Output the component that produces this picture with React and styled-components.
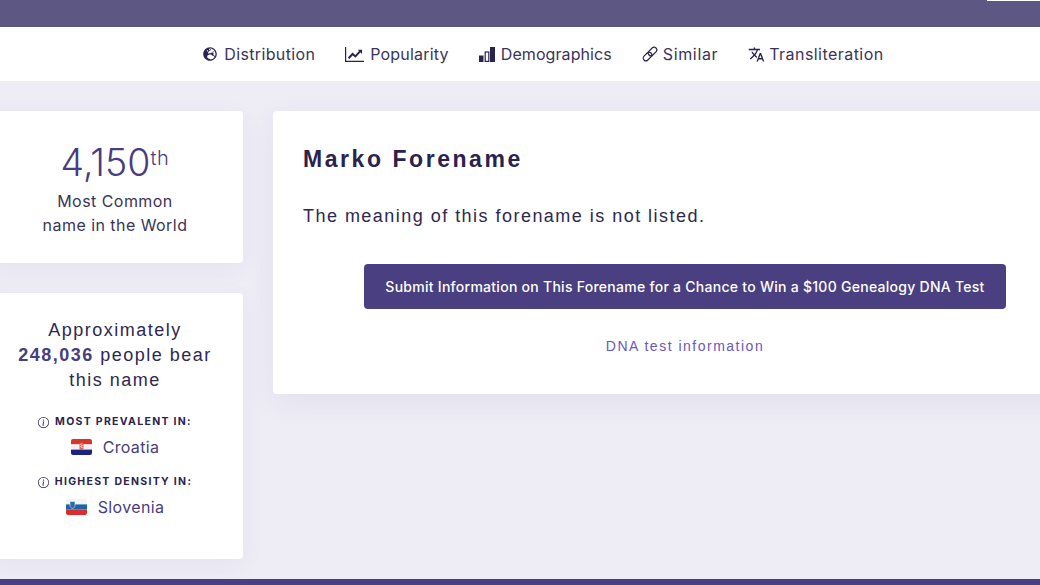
import React from 'react';
import styled, { createGlobalStyle } from 'styled-components';
import { FaGlobeEurope } from 'react-icons/fa';
import { MdTranslate } from 'react-icons/md';
import { BsInfoCircle } from 'react-icons/bs';

const GlobalStyle = createGlobalStyle`
  html, body {
    margin: 0;
    height: 585px;
    overflow: hidden;
    background: #eeedf6;
  }
`;

const Page = styled.div`
  height: 585px;
  display: flex;
  flex-direction: column;
  font-family: Inter, "Liberation Sans", sans-serif;
  color: #2b234f;
`;

const TopBar = styled.div`
  height: 27px;
  flex: none;
  background: #5c5783;
  display: flex;
  justify-content: flex-end;
`;

const TopTab = styled.div`
  width: 53px;
  height: 1px;
  background: #fff;
`;

const Nav = styled.nav`
  height: 54px;
  flex: none;
  background: #fff;
  display: flex;
  align-items: center;
  justify-content: center;
  gap: 30px;
  padding-left: 47px;
`;

const NavItem = styled.a`
  display: flex;
  align-items: center;
  gap: ${p => p.$gap || 6}px;
  font-size: 16px;
  letter-spacing: ${p => p.$ls}px;
  color: #3a3458;
  svg {
    flex: none;
    color: #2b234f;
    font-size: ${p => p.$icon || 16}px;
  }
`;

const Content = styled.div`
  flex: 1;
  display: flex;
  gap: 30px;
  align-items: flex-start;
  margin-left: -13px;
  width: 1110px;
  padding-top: 30px;
`;

const Sidebar = styled.aside`
  width: 256px;
  flex: none;
  display: flex;
  flex-direction: column;
  gap: 30px;
`;

const Card = styled.div`
  background: #fff;
  border-radius: 4px;
  box-shadow: 0 6px 24px rgba(60, 50, 120, 0.05);
`;

const RankCard = styled(Card)`
  height: 152px;
  box-sizing: border-box;
  padding-top: 30px;
  text-align: center;
`;

const RankNumber = styled.div`
  font-size: 37.5px;
  font-weight: 300;
  line-height: 44px;
  color: #483d80;
  sup {
    font-size: 20px;
    line-height: 0;
    vertical-align: 11px;
    letter-spacing: 0.6px;
  }
`;

const RankText = styled.div`
  font-size: 16px;
  line-height: 24px;
  letter-spacing: 0.45px;
  margin-top: 4px;
  color: #3a3458;
`;

const PeopleCard = styled(Card)`
  height: 266px;
  box-sizing: border-box;
  padding-top: 25px;
  text-align: center;
`;

const PeopleText = styled.div`
  font-family: "Liberation Sans", Arial, sans-serif;
  font-size: 18px;
  line-height: 25px;
  letter-spacing: 1.5px;
  color: #2e2851;
  b {
    color: #483d80;
  }
`;

const PrevalentLabel = styled.div`
  display: flex;
  align-items: center;
  justify-content: center;
  gap: 6px;
  font-size: 10.5px;
  font-weight: 700;
  letter-spacing: 1.3px;
  line-height: 14px;
  margin-top: ${p => p.$top}px;
  color: #2b234f;
  svg {
    font-size: 11px;
  }
`;

const Country = styled.div`
  display: flex;
  align-items: center;
  justify-content: center;
  gap: 11px;
  font-size: 16px;
  line-height: 24px;
  letter-spacing: 0.35px;
  margin-top: 6px;
  color: #483d80;
`;

const MainCard = styled(Card)`
  flex: 1;
  height: 283px;
  box-sizing: border-box;
  padding: 33px 30px 0;
  font-family: "Liberation Sans", Arial, sans-serif;
  box-shadow: 0 8px 30px rgba(60, 50, 120, 0.07);
`;

const Title = styled.h1`
  margin: 0;
  font-size: 23px;
  line-height: 30px;
  font-weight: 700;
  letter-spacing: 2.55px;
  color: #2b234f;
`;

const Meaning = styled.p`
  margin: 30px 0 0;
  font-size: 18px;
  line-height: 24px;
  letter-spacing: 1.47px;
  color: #2e2851;
`;

const Actions = styled.div`
  display: flex;
  flex-direction: column;
  align-items: center;
  margin-top: 36px;
`;

const SubmitButton = styled.button`
  width: 642px;
  height: 45px;
  border: 0;
  border-radius: 4px;
  background: #4a3f80;
  color: #fff;
  font-family: Inter, sans-serif;
  font-size: 14px;
  font-weight: 500;
  letter-spacing: 0.27px;
`;

const TestLink = styled.a`
  margin-top: 28px;
  font-size: 14px;
  line-height: 18px;
  letter-spacing: 1.5px;
  color: #6a58c0;
`;

const Footer = styled.div`
  height: 6px;
  flex: none;
  background: #4a3f80;
`;

const FlagSvg = styled.svg`
  width: 21px;
  height: 16px;
  flex: none;
  border-radius: 2px;
`;

const CroatiaFlag = () => (
  <FlagSvg viewBox="0 0 21 16">
    <rect width="21" height="5.4" fill="#d8362b" />
    <rect y="5.4" width="21" height="5.2" fill="#f6eef0" />
    <rect y="10.6" width="21" height="5.4" fill="#1a237e" />
    <rect x="8.5" y="3.5" width="4" height="7.5" rx="1.2" fill="#d9675c" />
    <path d="M9.5 5h1v1h-1zM10.5 6h1v1h-1zM9.5 7h1v1h-1zM10.5 8h1v1h-1z" fill="#f6eef0" />
  </FlagSvg>
);

const SloveniaFlag = () => (
  <FlagSvg viewBox="0 0 21 16">
    <rect width="21" height="5.4" fill="#f3f3f6" />
    <rect y="5.4" width="21" height="5.2" fill="#1a66ab" />
    <rect y="10.6" width="21" height="5.4" fill="#dd2c2c" />
    <path d="M4 2.5h5v4c0 1.6-1.3 2.6-2.5 3-1.2-.4-2.5-1.4-2.5-3z" fill="#2a6aa8" stroke="#e8eef5" strokeWidth=".6" />
  </FlagSvg>
);

const ChartIcon = () => (
  <svg width="19" height="15" viewBox="0 0 19 15" fill="none">
    <path d="M.6 0v14.3H19" stroke="currentColor" strokeWidth="1.2" />
    <path d="M3.6 11.2l4-4.2 2.8 2.4 4.6-5" stroke="currentColor" strokeWidth="2" />
    <path d="M12.8 2.8H17v4.2z" fill="currentColor" />
  </svg>
);

const BarsIcon = () => (
  <svg width="16" height="15" viewBox="0 0 16 15">
    <rect y="8.5" width="4.5" height="6.5" fill="currentColor" />
    <rect x="6.2" y="5" width="3.6" height="9.4" fill="none" stroke="currentColor" strokeWidth="1.2" />
    <rect x="11" width="5" height="15" fill="currentColor" />
  </svg>
);

const ChainIcon = () => (
  <svg width="16" height="16" viewBox="0 0 16 16" fill="none" stroke="currentColor" strokeWidth="1.2">
    <rect x="7.8" y="0.6" width="5.4" height="9.8" rx="2.7" transform="rotate(45 10.5 5.5)" />
    <rect x="2.8" y="5.6" width="5.4" height="9.8" rx="2.7" transform="rotate(45 5.5 10.5)" />
  </svg>
);

const App = () => {
  return (
    <Page>
      <GlobalStyle />
      <TopBar><TopTab /></TopBar>
      <Nav>
        <NavItem $icon={14} $gap={7} $ls={0.35}><FaGlobeEurope />Distribution</NavItem>
        <NavItem $ls={0.2}><ChartIcon />Popularity</NavItem>
        <NavItem $ls={0.08}><BarsIcon />Demographics</NavItem>
        <NavItem $gap={5} $ls={0.65}><ChainIcon />Similar</NavItem>
        <NavItem $icon={17} $gap={4} $ls={0.45}><MdTranslate />Transliteration</NavItem>
      </Nav>
      <Content>
        <Sidebar>
          <RankCard>
            <RankNumber>4,150<sup>th</sup></RankNumber>
            <RankText>Most Common<br />name in the World</RankText>
          </RankCard>
          <PeopleCard>
            <PeopleText>Approximately<br /><b>248,036</b> people bear<br />this name</PeopleText>
            <PrevalentLabel $top={22}><BsInfoCircle />MOST PREVALENT IN:</PrevalentLabel>
            <Country><CroatiaFlag />Croatia</Country>
            <PrevalentLabel $top={16}><BsInfoCircle />HIGHEST DENSITY IN:</PrevalentLabel>
            <Country><SloveniaFlag />Slovenia</Country>
          </PeopleCard>
        </Sidebar>
        <MainCard>
          <Title>Marko Forename</Title>
          <Meaning>The meaning of this forename is not listed.</Meaning>
          <Actions>
            <SubmitButton>Submit Information on This Forename for a Chance to Win a $100 Genealogy DNA Test</SubmitButton>
            <TestLink>DNA test information</TestLink>
          </Actions>
        </MainCard>
      </Content>
      <Footer />
    </Page>
  );
};

export default App;
